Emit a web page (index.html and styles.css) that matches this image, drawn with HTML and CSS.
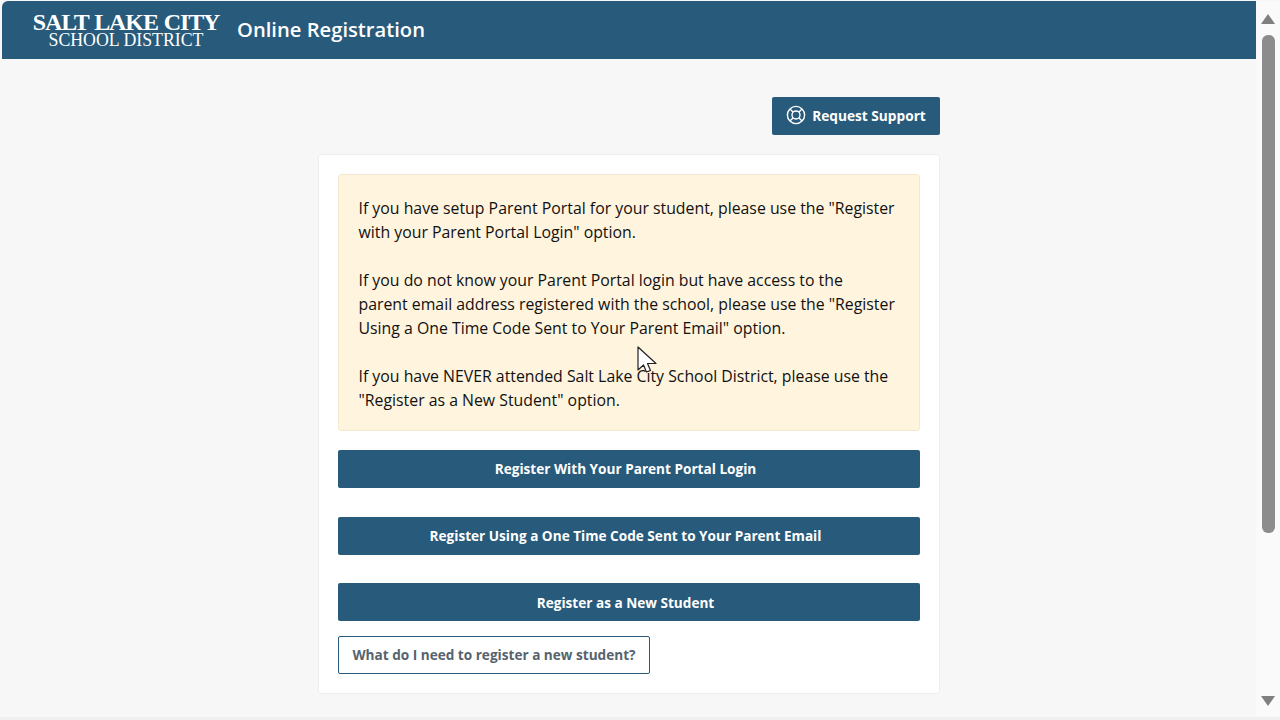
FILE: index.html
```html
<!DOCTYPE html>
<html lang="en">
<head>
    <meta charset="UTF-8">
    <title>Online Registration</title>
    <link rel="stylesheet" href="styles.css">
</head>
<body>
    <div class="window">
        <div class="page">
            <!-- Header bar -->
            <header class="header">
                <div class="logo">
                    <div class="logo-top">SALT LAKE CITY</div>
                    <div class="logo-bottom">SCHOOL DISTRICT</div>
                </div>
                <div class="app-title">Online Registration</div>
            </header>

            <main class="content">
                <div class="support-row">
                    <a class="btn support-btn">
                        <svg class="support-icon" viewBox="0 0 20 20" fill="none" stroke="currentColor" stroke-width="1.4">
                            <circle cx="10" cy="10" r="8.6"/>
                            <circle cx="10" cy="10" r="4"/>
                            <path d="M4 4l3.2 3.2M16 4l-3.2 3.2M4 16l3.2-3.2M16 16l-3.2-3.2"/>
                        </svg>
                        Request Support
                    </a>
                </div>

                <div class="card">
                    <div class="notice">
                        <p>If you have setup Parent Portal for your student, please use the "Register with your Parent Portal Login" option.</p>
                        <p>If you do not know your Parent Portal login but have access to the<br>parent email address registered with the school, please use the "Register Using a One Time Code Sent to Your Parent Email" option.</p>
                        <p>If you have NEVER attended Salt Lake City School District, please use the "Register as a New Student" option.</p>
                    </div>
                    <a class="btn wide-btn">Register With Your Parent Portal Login</a>
                    <a class="btn wide-btn">Register Using a One Time Code Sent to Your Parent Email</a>
                    <a class="btn wide-btn last-wide">Register as a New Student</a>
                    <a class="btn outline-btn">What do I need to register a new student?</a>
                </div>
            </main>
        </div>

        <!-- Scrollbar -->
        <div class="scrollbar">
            <svg class="arrow" viewBox="0 0 14 10"><path d="M7 0L14 10H0z"/></svg>
            <div class="track"><div class="thumb"></div></div>
            <svg class="arrow" viewBox="0 0 14 10"><path d="M0 0H14L7 10z"/></svg>
        </div>
    </div>

    <!-- Mouse pointer captured in the screenshot -->
    <svg class="cursor" viewBox="0 0 20 28">
        <path d="M1 1V24L6.5 19L9.5 26L13.5 24.5L10.5 17.5H19z" fill="#fff" stroke="#222" stroke-width="1.2" stroke-linejoin="round"/>
    </svg>
</body>
</html>
```

FILE: styles.css
```css
/* General page styling */
body {
    margin: 0;
    height: 720px;
    overflow: hidden;
    font-family: "Open Sans", "Noto Sans", sans-serif;
    background: #f7f7f7;
    color: #111;
}

.window {
    display: flex;
    height: 720px;
    padding: 1px 0 0 2px;
    box-sizing: border-box;
    border-bottom: 3px solid #efefef;
}

.page {
    flex: 1;
    min-width: 0;
}

/* Header */
.header {
    display: flex;
    align-items: center;
    height: 58px;
    background: #285a7b;
    color: #fff;
    border-top-left-radius: 6px;
}

.logo {
    width: 188px;
    margin-left: 30px;
    padding-bottom: 1px;
    font-family: "Liberation Serif", serif;
    text-align: center;
}

.logo-top {
    font-size: 24px;
    font-weight: 700;
    line-height: 22px;
    letter-spacing: -1.1px;
    word-spacing: 1px;
    white-space: nowrap;
}

.logo-bottom {
    font-size: 17.8px;
    line-height: 15px;
    white-space: nowrap;
}

.app-title {
    margin-left: 17px;
    padding-bottom: 2px;
    font-size: 20.2px;
    font-weight: 600;
}

/* Main column */
.content {
    width: 622px;
    margin: 0 auto;
}

.support-row {
    display: flex;
    justify-content: flex-end;
    padding-top: 38px;
    margin-bottom: 20px;
}

.btn {
    display: flex;
    align-items: center;
    justify-content: center;
    box-sizing: border-box;
    height: 38px;
    padding-bottom: 2px;
    background: #285a7b;
    color: #fff;
    font-size: 13.6px;
    font-weight: 700;
    border-radius: 2px;
}

.support-btn {
    width: 168px;
    gap: 6px;
    font-size: 13.7px;
}

.support-icon {
    width: 20px;
    height: 20px;
}

.card {
    margin: 0 1px;
    padding: 19px;
    background: #fff;
    border-radius: 3px;
    box-shadow: 0 0 2px rgba(0, 0, 0, 0.12);
}

.notice {
    padding: 21px 21px 18px 19.5px;
    margin-bottom: 19px;
    background: #fff4de;
    border: 1px solid #f3e8cf;
    border-radius: 3px;
    font-size: 15.83px;
    line-height: 24px;
}

.notice p {
    margin: 0 0 24px;
}

.notice p:last-child {
    margin-bottom: 0;
}

.wide-btn {
    margin-bottom: 29px;
    padding-right: 7px;
}

.wide-btn:nth-of-type(2) {
    margin-bottom: 28px;
}

.last-wide {
    margin-bottom: 15px;
    padding-bottom: 0;
}

.outline-btn {
    width: 312px;
    background: #fff;
    border: 1px solid #285a7b;
    color: #56636e;
}

/* Scrollbar */
.scrollbar {
    display: flex;
    flex-direction: column;
    align-items: center;
    width: 24px;
    padding: 13px 0 11px;
    box-sizing: border-box;
    background: #fafafa;
}

.arrow {
    width: 14px;
    height: 10px;
    fill: #7f7f7f;
}

.track {
    flex: 1;
    width: 100%;
}

.thumb {
    width: 13px;
    height: 498px;
    margin: 11px auto 0;
    background: #8c8c8c;
    border-radius: 6px;
}

.cursor {
    position: absolute;
    left: 637px;
    top: 346px;
    width: 20px;
    height: 28px;
}
```
